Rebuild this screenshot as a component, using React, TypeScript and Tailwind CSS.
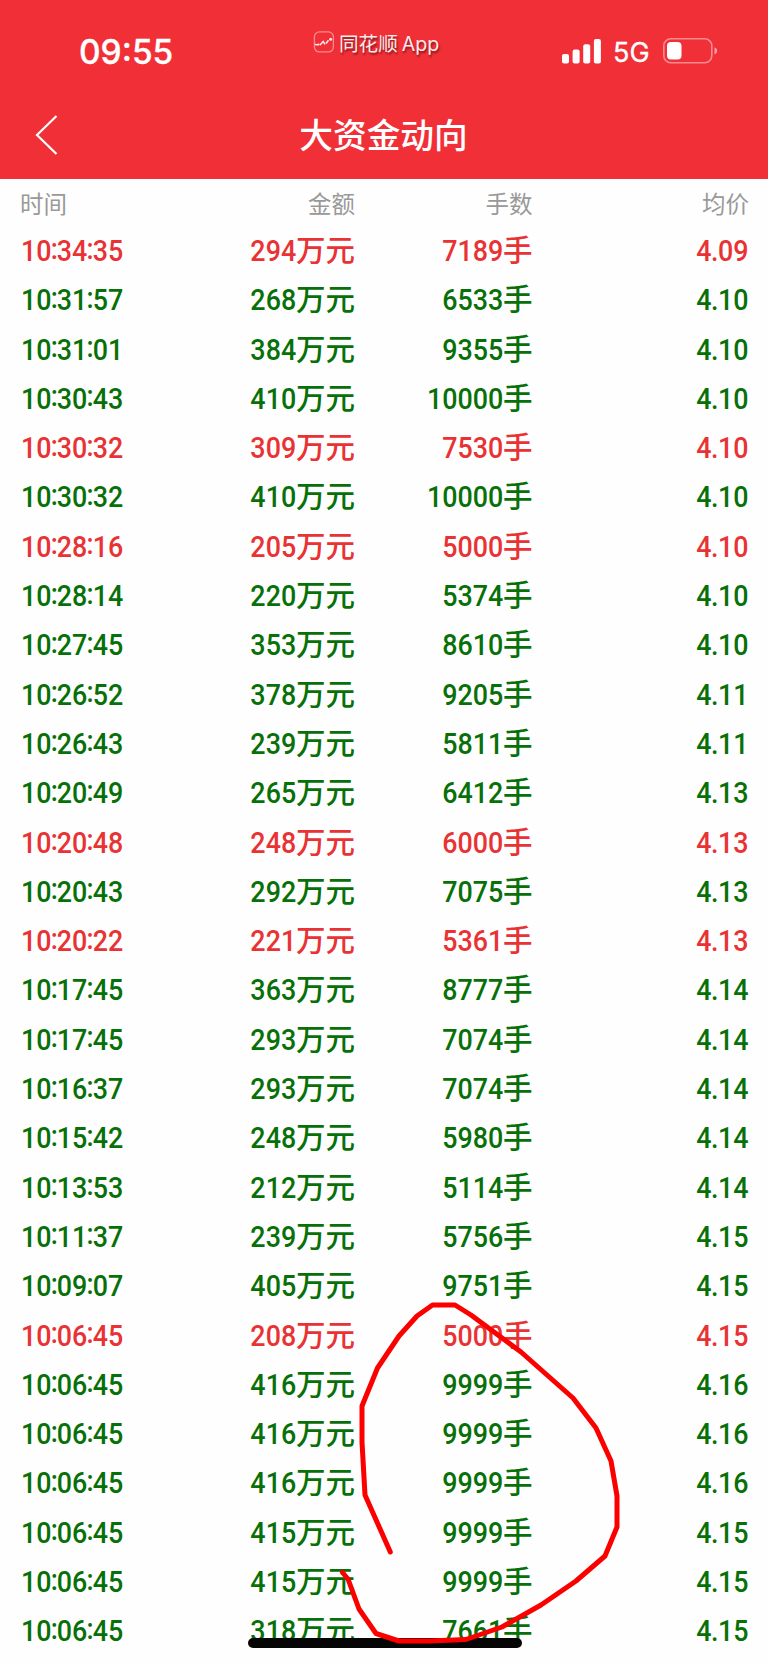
type Trade = [time: string, amount: string, lots: string, price: string, rising?: boolean];

const trades: Trade[] = [
  ['10:34:35', '294', '7189', '4.09', true],
  ['10:31:57', '268', '6533', '4.10'],
  ['10:31:01', '384', '9355', '4.10'],
  ['10:30:43', '410', '10000', '4.10'],
  ['10:30:32', '309', '7530', '4.10', true],
  ['10:30:32', '410', '10000', '4.10'],
  ['10:28:16', '205', '5000', '4.10', true],
  ['10:28:14', '220', '5374', '4.10'],
  ['10:27:45', '353', '8610', '4.10'],
  ['10:26:52', '378', '9205', '4.11'],
  ['10:26:43', '239', '5811', '4.11'],
  ['10:20:49', '265', '6412', '4.13'],
  ['10:20:48', '248', '6000', '4.13', true],
  ['10:20:43', '292', '7075', '4.13'],
  ['10:20:22', '221', '5361', '4.13', true],
  ['10:17:45', '363', '8777', '4.14'],
  ['10:17:45', '293', '7074', '4.14'],
  ['10:16:37', '293', '7074', '4.14'],
  ['10:15:42', '248', '5980', '4.14'],
  ['10:13:53', '212', '5114', '4.14'],
  ['10:11:37', '239', '5756', '4.15'],
  ['10:09:07', '405', '9751', '4.15'],
  ['10:06:45', '208', '5000', '4.15', true],
  ['10:06:45', '416', '9999', '4.16'],
  ['10:06:45', '416', '9999', '4.16'],
  ['10:06:45', '416', '9999', '4.16'],
  ['10:06:45', '415', '9999', '4.15'],
  ['10:06:45', '415', '9999', '4.15'],
  ['10:06:45', '318', '7661', '4.15'],
];

const columns = 'grid grid-cols-[150px_185px_177.5px_216.5px] pl-5 items-center';

function Num({ text, left = false }: { text: string; left?: boolean }) {
  return (
    <span
      className={`inline-block scale-x-[0.895] font-['Roboto',sans-serif] text-[30px] font-medium ${
        left ? 'origin-left' : 'origin-right'
      }`}
    >
      {text.split(/([:.])/).map((part, i) =>
        part === ':' ? (
          <span key={i} className="relative -top-[2.5px] -mx-[1px]">:</span>
        ) : part === '.' ? (
          <span key={i} className="-mx-[0.5px]">.</span>
        ) : (
          part
        ),
      )}
    </span>
  );
}

function StatusBar() {
  return (
    <div className="flex h-[102px] items-center pl-[79px]">
      <span className="w-[233px] pt-[3px] font-['Inter',sans-serif] text-[33.5px] leading-none font-medium [-webkit-text-stroke:0.3px_white]">09:55</span>
      <div className="mb-[15px] flex w-[250px] items-center opacity-90">
        <svg className="mb-[3px] size-[24px]" viewBox="0 0 24 24" fill="none">
          <rect x="2.4" y="1.9" width="19" height="20" rx="5" stroke="white" strokeOpacity=".5" strokeWidth="1.3" />
          <path d="M3 14.5l3 .3M8 15l3.2-3.6 1.8 3M14 13.5l2.5-3.2" stroke="white" strokeWidth="1.5" />
          <circle cx="18.6" cy="9.2" r="1.5" fill="white" />
          <circle cx="6.5" cy="14.5" r="1.1" fill="white" />
        </svg>
        <span className="ml-[3px] font-['Noto_Sans_CJK_SC',sans-serif] text-[19.6px] leading-6 whitespace-nowrap [text-shadow:1px_2px_2px_rgb(0_0_0/0.5)]">
          同花顺<span className="ml-[4px] font-['Inter',sans-serif] text-[19.6px]">App</span>
        </span>
      </div>
      <svg className="h-[25px] w-[40px]" viewBox="0 0 40 25" fill="white">
        <rect x="0" y="15" width="7" height="9.5" rx="2" />
        <rect x="10.6" y="10.5" width="7" height="14" rx="2" />
        <rect x="21.2" y="5.2" width="7" height="19.3" rx="2" />
        <rect x="31.9" y="0" width="7" height="24.5" rx="2" />
      </svg>
      <span className="ml-[11px] w-[50px] pt-[2px] font-['Inter',sans-serif] text-[27px] leading-none [-webkit-text-stroke:0.3px_white]">5G</span>
      <svg className="h-[26px] w-[55px]" viewBox="0 0 55 26">
        <rect x=".8" y=".8" width="48" height="24" rx="7" fill="none" stroke="white" strokeOpacity=".45" strokeWidth="1.6" />
        <rect x="4" y="4" width="14.5" height="17.6" rx="4" fill="white" />
        <path d="M51.5 9.2q2.8 1 2.8 3.6t-2.8 3.6z" fill="white" fillOpacity=".55" />
      </svg>
    </div>
  );
}

export default function App() {
  return (
    <div className="relative h-[1664px] w-[768px] overflow-hidden bg-[#fefefe] font-['Noto_Sans_CJK_SC',sans-serif]">
      <header className="h-[179px] bg-[#f12f37] text-white">
        <StatusBar />
        <div className="grid h-[66px] grid-cols-[80px_1fr_81px] items-center">
          <svg className="ml-[34px] h-[42px] w-[26px]" viewBox="0 0 26 42" fill="none" stroke="white" strokeWidth="2.2">
            <path d="M22.5 2L3 21l19.5 19" />
          </svg>
          <h1 className="pb-[2px] text-center text-[33.7px] leading-[64px] font-medium">大资金动向</h1>
        </div>
      </header>

      <div className={`${columns} h-[45px] pt-[3px] text-[23.5px] leading-[42px] text-[#999999]`}>
        <span>时间</span>
        <span className="text-right">金额</span>
        <span className="text-right">手数</span>
        <span className="text-right">均价</span>
      </div>

      <main>
        {trades.map(([time, amount, lots, price, rising], i) => (
          <div
            key={i}
            className={`${columns} h-[49.3px] text-[29.5px] leading-[49.3px] font-medium ${
              rising ? 'text-[#e93234]' : 'text-[#087008]'
            }`}
          >
            <span className="pl-[1px]"><Num text={time} left /></span>
            <span className="text-right"><Num text={amount} />万元</span>
            <span className="text-right"><Num text={lots} />手</span>
            <span className="text-right"><Num text={price} /></span>
          </div>
        ))}
      </main>

      <div className="absolute top-[1638px] left-[248px] h-[10px] w-[274px] rounded-full bg-[#050505]" />
      <svg className="absolute top-0 left-0 h-[1664px] w-[768px]" viewBox="0 0 768 1664" fill="none">
        <path
          d="M390.3 1552L365 1495L362 1442V1406L377.5 1368L399 1336L417 1316L432.5 1305H455L471 1315L521 1352L547 1375L573 1398L596 1428L611 1461L617 1496V1527L605 1556L576 1581L541 1605L502 1627L466 1639.5L430 1641H399L376 1633.5L359 1609L348 1579L342.5 1572.5"
          stroke="#fc0000"
          strokeWidth="5"
          strokeLinecap="round"
          strokeLinejoin="round"
        />
      </svg>
    </div>
  );
}
